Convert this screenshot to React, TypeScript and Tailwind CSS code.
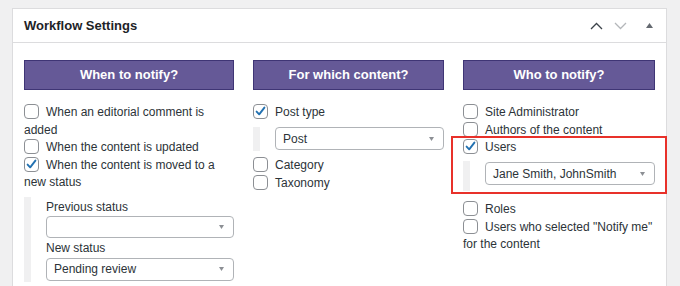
import React from "react"

const FONT = { fontFamily: '"Liberation Sans", Arial, sans-serif' }

function Box({ checked }: { checked?: boolean }) {
  return (
    <span className="mr-[7px] inline-block h-[15px] w-[15px] rounded-[4px] border border-[#8c8f94] bg-white align-[-3px]">
      {checked && (
        <svg viewBox="0 0 13 13" className="block h-[13px] w-[13px]">
          <path
            d="M2.6 6.6 L5.2 9.3 L10.4 2.6"
            fill="none"
            stroke="#2271b1"
            strokeWidth="1.9"
            strokeLinecap="round"
            strokeLinejoin="round"
          />
        </svg>
      )}
    </span>
  )
}

function Option({ label, checked }: { label: string; checked?: boolean }) {
  return (
    <div className="leading-[17.5px]">
      <Box checked={checked} />
      {label}
    </div>
  )
}

function Select({ value, className = "" }: { value?: string; className?: string }) {
  return (
    <div
      className={`flex items-center justify-between rounded-[4px] border border-[#b0b3b7] bg-white pl-[7px] pr-[9px] ${className}`}
    >
      <span>{value}</span>
      <svg width="5" height="4" viewBox="0 0 5 4" className="block">
        <polygon points="0,0 5,0 2.5,4" fill="#8c8f94" />
      </svg>
    </div>
  )
}

function ColumnHead({ title }: { title: string }) {
  return (
    <div className="flex h-[30px] items-center justify-center border border-[#3f3575] bg-[#655997] text-[13px] font-bold text-white">
      {title}
    </div>
  )
}

export default function App() {
  return (
    <div
      className="h-[286px] overflow-hidden bg-[#f0f0f1] pl-[12px] pt-[8px] text-[12px] text-[#2c3338]"
      style={FONT}
    >
      <div className="h-[300px] w-[655px] border border-[#dcdcde] bg-white">
        <div className="flex h-[34px] items-center justify-between border-b border-[#dcdcde] pl-[11px] pr-[13px]">
          <h2 className="text-[13px] font-bold text-[#1d2327]">Workflow Settings</h2>
          <div className="flex items-center">
            <svg width="13" height="8" viewBox="0 0 13 8" className="block">
              <path d="M1 7 L6.5 1.5 L12 7" fill="none" stroke="#3c434a" strokeWidth="1.3" />
            </svg>
            <svg width="13" height="8" viewBox="0 0 13 8" className="ml-[11px] block">
              <path d="M1 1 L6.5 6.5 L12 1" fill="none" stroke="#b4b7ba" strokeWidth="1.3" />
            </svg>
            <svg width="7" height="5" viewBox="0 0 7 5" className="ml-[19px] block">
              <polygon points="0,5 7,5 3.5,0" fill="#646970" />
            </svg>
          </div>
        </div>

        <div className="flex gap-[19px] px-[11px] pt-[17px]">
          <div className="w-[210px] shrink-0">
            <ColumnHead title="When to notify?" />
            <div className="mt-[14px]">
              <Option label="When an editorial comment is added" />
              <Option label="When the content is updated" />
              <Option label="When the content is moved to a new status" checked />
            </div>
            <div className="mt-[5px] flex">
              <div className="w-[7px] bg-[#f0f0f1]" />
              <div className="flex-1 pb-[1px] pl-[15px] pt-[1px]">
                <div className="leading-[18px]">Previous status</div>
                <Select className="h-[22px]" />
                <div className="leading-[20px]">New status</div>
                <Select value="Pending review" className="h-[23px]" />
              </div>
            </div>
          </div>

          <div className="w-[191px] shrink-0">
            <ColumnHead title="For which content?" />
            <div className="mt-[14px]">
              <Option label="Post type" checked />
            </div>
            <div className="mt-[5.5px] flex">
              <div className="w-[7px] bg-[#f0f0f1]" />
              <div className="flex-1 pb-[1px] pl-[15px]">
                <Select value="Post" className="h-[23px]" />
              </div>
            </div>
            <div className="mt-[6px]">
              <Option label="Category" />
              <Option label="Taxonomy" />
            </div>
          </div>

          <div className="relative w-[192px] shrink-0">
            <ColumnHead title="Who to notify?" />
            <div className="mt-[14px]">
              <Option label="Site Administrator" />
              <Option label="Authors of the content" />
              <Option label="Users" checked />
            </div>
            <div className="mt-[4.5px] flex">
              <div className="w-[7px] bg-[#f0f0f1]" />
              <div className="flex-1 pb-[6px] pl-[15px] pt-[1px]">
                <Select value="Jane Smith, JohnSmith" className="h-[23px]" />
              </div>
            </div>
            <div className="mt-[10px]">
              <Option label="Roles" />
              <Option label='Users who selected "Notify me" for the content' />
            </div>
            <div className="absolute left-[-12px] top-[76px] h-[58px] w-[216px] border-2 border-[#e8312a]" />
          </div>
        </div>
      </div>
    </div>
  )
}
